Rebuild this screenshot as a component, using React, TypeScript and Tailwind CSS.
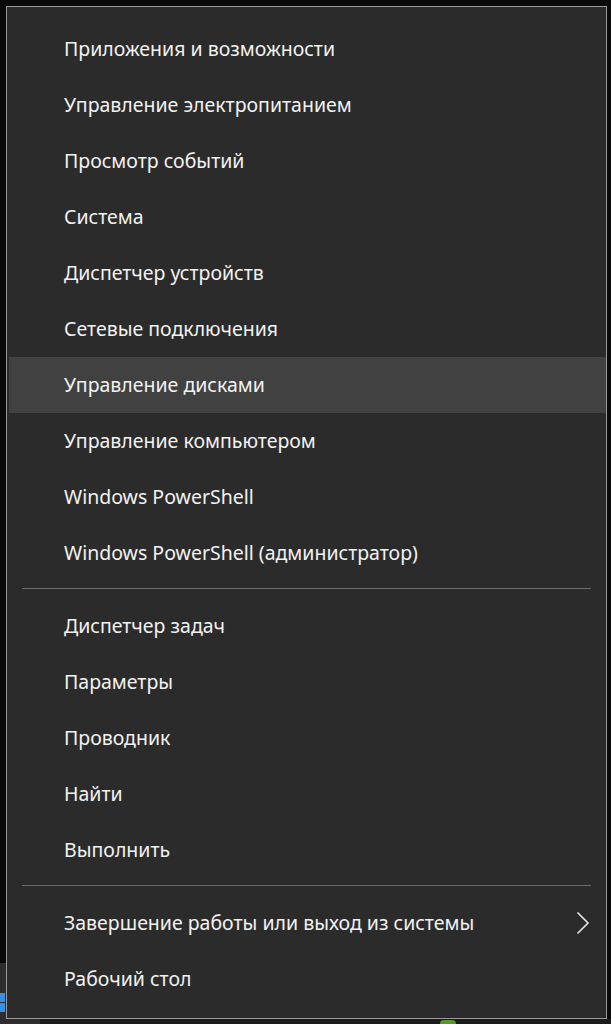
import React from "react";

const GROUPS = [
  [
    "Приложения и возможности",
    "Управление электропитанием",
    "Просмотр событий",
    "Система",
    "Диспетчер устройств",
    "Сетевые подключения",
    "Управление дисками",
    "Управление компьютером",
    "Windows PowerShell",
    "Windows PowerShell (администратор)",
  ],
  ["Диспетчер задач", "Параметры", "Проводник", "Найти", "Выполнить"],
  ["Завершение работы или выход из системы", "Рабочий стол"],
];

const HOVERED = "Управление дисками";
const SUBMENU = "Завершение работы или выход из системы";

function MenuItem({ label }: { label: string }) {
  const active = label === HOVERED;
  return (
    <div
      className={
        "flex h-[56px] items-center justify-between ml-[2px] pl-[55px] pr-[16px] " +
        (active ? "bg-[#414141]" : "")
      }
    >
      <span className="text-[19.5px] text-[#f2f2f2] leading-none">{label}</span>
      {label === SUBMENU && (
        <svg width="14" height="24" viewBox="0 0 14 24" className="text-[#e6e6e6]">
          <path d="M1.5 1.5 L12 12 L1.5 22.5" fill="none" stroke="currentColor" strokeWidth="1.6" />
        </svg>
      )}
    </div>
  );
}

export default function App() {
  return (
    <div
      className="relative w-[611px] h-[1024px] bg-[#0a0a0a] overflow-hidden pt-[6px] pl-[6px]"
      style={{ fontFamily: '"Noto Sans", "Open Sans", sans-serif' }}
    >
      {/* desktop / taskbar bits peeking out behind the menu */}
      <div className="absolute left-0 right-0 top-[1019px] bottom-0 bg-[#1b1b1b]" />
      <div className="absolute left-0 top-[963px] w-[40px] bottom-0 bg-[#2d2d2d]" />
      <div className="absolute left-0 top-[993px] w-[5px] h-[9px] bg-[#3a8ee0]" />
      <div className="absolute left-0 top-[1003px] w-[5px] h-[9px] bg-[#3a8ee0]" />
      <div className="absolute left-[440px] top-[1020px] w-[16px] h-[4px] rounded-t-full bg-[#5a9a2a]" />

      <div className="relative w-[601px] h-[1013px] bg-[#2b2b2b] border border-[#9a9a9a] pt-[14px]">
        {GROUPS.map((group, gi) => (
          <div key={gi}>
            {gi > 0 && <div className="mx-[15px] mt-[7px] mb-[9px] h-px bg-[#6b6b6b]" />}
            {group.map((label) => (
              <MenuItem key={label} label={label} />
            ))}
          </div>
        ))}
      </div>
    </div>
  );
}
